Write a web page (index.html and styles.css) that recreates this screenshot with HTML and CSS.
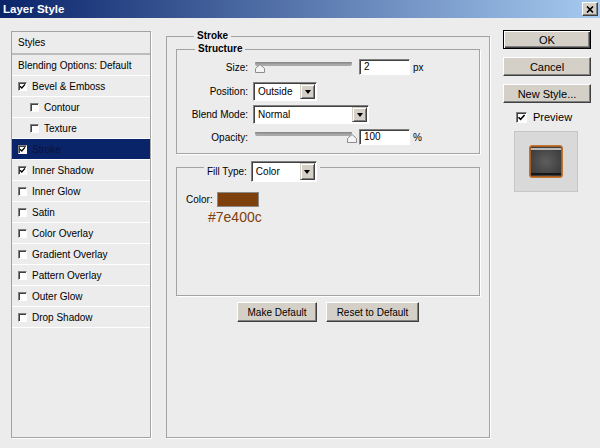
FILE: index.html
```html
<!DOCTYPE html>
<html>
<head>
<meta charset="utf-8">
<title>Layer Style</title>
<link rel="stylesheet" href="styles.css">
</head>
<body>
<div class="titlebar">
  <span class="title">Layer Style</span>
  <span class="close"><svg width="8" height="7" viewBox="0 0 8 7"><path d="M1 0.5 L7 6.5 M7 0.5 L1 6.5" stroke="#000" stroke-width="1.7" fill="none"/></svg></span>
</div>
<div class="content">
  <div class="list">
    <div class="row head styles">Styles</div>
    <div class="row">Blending Options: Default</div>
    <div class="row"><span class="cb"><svg width="7" height="7" viewBox="0 0 7 7"><path d="M1 3.2 L2.8 5 L6 1.4" stroke="#000" stroke-width="1.4" fill="none"/></svg></span>Bevel &amp; Emboss</div>
    <div class="row sub"><span class="cb"></span>Contour</div>
    <div class="row sub"><span class="cb"></span>Texture</div>
    <div class="row selected"><span class="cb"><svg width="7" height="7" viewBox="0 0 7 7"><path d="M1 3.2 L2.8 5 L6 1.4" stroke="#000" stroke-width="1.4" fill="none"/></svg></span>Stroke</div>
    <div class="row"><span class="cb"><svg width="7" height="7" viewBox="0 0 7 7"><path d="M1 3.2 L2.8 5 L6 1.4" stroke="#000" stroke-width="1.4" fill="none"/></svg></span>Inner Shadow</div>
    <div class="row"><span class="cb"></span>Inner Glow</div>
    <div class="row"><span class="cb"></span>Satin</div>
    <div class="row"><span class="cb"></span>Color Overlay</div>
    <div class="row"><span class="cb"></span>Gradient Overlay</div>
    <div class="row"><span class="cb"></span>Pattern Overlay</div>
    <div class="row"><span class="cb"></span>Outer Glow</div>
    <div class="row"><span class="cb"></span>Drop Shadow</div>
  </div>

  <fieldset class="group stroke">
    <legend>Stroke</legend>
    <fieldset class="group structure">
      <legend>Structure</legend>
      <div class="field f-size">
        <span class="lbl">Size:</span>
        <svg class="slider" width="104" height="16" viewBox="0 0 104 16"><rect x="2" y="3" width="97" height="4" rx="2" fill="#a9a9a9"/><rect x="2" y="3" width="97" height="1.5" rx="0.75" fill="#8a8a8a"/><path d="M7 5.5 L11.5 9.5 L11.5 13.5 L2.5 13.5 L2.5 9.5 Z" fill="#f4f4f4" stroke="#8c8c8c" stroke-width="1"/></svg>
        <span class="input">2</span><span class="unit">px</span>
      </div>
      <div class="field f-pos">
        <span class="lbl">Position:</span>
        <div class="combo w-pos"><span class="val">Outside</span><span class="arrow"></span></div>
      </div>
      <div class="field f-blend">
        <span class="lbl">Blend Mode:</span>
        <div class="combo w-blend"><span class="val">Normal</span><span class="arrow"></span></div>
      </div>
      <div class="field f-op">
        <span class="lbl">Opacity:</span>
        <svg class="slider" width="104" height="16" viewBox="0 0 104 16"><rect x="2" y="3" width="97" height="4" rx="2" fill="#a9a9a9"/><rect x="2" y="3" width="97" height="1.5" rx="0.75" fill="#8a8a8a"/><path d="M99 5.5 L103.5 9.5 L103.5 13.5 L94.5 13.5 L94.5 9.5 Z" fill="#f4f4f4" stroke="#8c8c8c" stroke-width="1"/></svg>
        <span class="input">100</span><span class="unit">%</span>
      </div>
    </fieldset>

    <fieldset class="group fill">
      <legend><div class="fill-legend"><span class="fl-lbl">Fill Type:</span><div class="combo w-fill"><span class="val">Color</span><span class="arrow"></span></div></div></legend>
      <div class="color-row"><span class="c-lbl">Color:</span><span class="swatch"></span></div>
      <div class="hex">#7e400c</div>
    </fieldset>

    <div class="actions">
      <button class="btn small w-make">Make Default</button>
      <button class="btn small w-reset">Reset to Default</button>
    </div>
  </fieldset>

  <div class="side">
    <button class="btn big default">OK</button>
    <button class="btn big">Cancel</button>
    <button class="btn big">New Style...</button>
    <div class="preview-row"><span class="cb cb-lg"><svg width="9" height="9" viewBox="0 0 9 9"><path d="M1.5 4.2 L3.6 6.3 L7.6 2" stroke="#000" stroke-width="1.6" fill="none"/></svg></span>Preview</div>
    <div class="preview-box">
      <svg width="34" height="33" viewBox="0 0 34 33">
        <defs>
          <radialGradient id="g" cx="50%" cy="50%" r="60%">
            <stop offset="0" stop-color="#5e5e5e"/>
            <stop offset="1" stop-color="#3c3c3c"/>
          </radialGradient>
        </defs>
        <rect x="0.5" y="0.5" width="33" height="32" rx="2.5" fill="#a85e22" stroke="#c27634"/>
        <rect x="2" y="2" width="30" height="29" fill="url(#g)"/>
        <rect x="2" y="3" width="30" height="2" fill="#b9b9b9"/>
        <rect x="2" y="28" width="30" height="2" fill="#161616"/>
      </svg>
    </div>
  </div>
</div>
</body>
</html>
```

FILE: styles.css
```css
* { box-sizing: border-box; }
html, body { margin: 0; padding: 0; }
body {
  width: 600px;
  height: 448px;
  overflow: hidden;
  background: #ececec;
  font-family: "Liberation Sans", Arial, sans-serif;
  font-size: 10px;
  color: #000;
}

.titlebar {
  height: 18px;
  background: linear-gradient(to right, #0a246a, #a6caf0);
  display: flex;
  align-items: center;
  justify-content: space-between;
  padding: 0 2px 0 3px;
}
.title { color: #fff; font-weight: bold; font-size: 11.5px; }
.close {
  width: 16px;
  height: 14px;
  background: #d4d0c8;
  border: 1px solid;
  border-color: #fff #404040 #404040 #fff;
  box-shadow: inset -1px -1px 0 #808080;
  display: flex;
  align-items: center;
  justify-content: center;
}
.close svg { display: block; }

.content {
  display: flex;
  align-items: flex-start;
  padding: 12px 0 0 11px;
}

/* left list */
.list {
  flex: none;
  width: 140px;
  height: 407px;
  margin-top: 1px;
  border: 1px solid #a3a3a3;
  box-shadow: 1px 1px 0 #fff;
}
.row {
  height: 21px;
  display: flex;
  align-items: center;
  padding-left: 6px;
  border-bottom: 1px solid #fff;
  white-space: nowrap;
}
.row.styles {
  height: 23px;
  border-bottom: 2px solid #bcbcbc;
}
.row.sub { padding-left: 18px; }
.row.selected { background: #0a246a; color: #0a1336; }

.cb {
  flex: none;
  width: 9px;
  height: 9px;
  margin-right: 5px;
  background: #fff;
  border: 1px solid;
  border-color: #808080 #fff #fff #808080;
  box-shadow: inset 1px 1px 0 #404040;
  display: flex;
}
.cb svg { display: block; }
.cb-lg { width: 11px; height: 11px; margin-right: 6px; }

/* group boxes */
.group {
  margin: 0;
  padding: 0;
  min-width: 0;
  border: 1px solid #a3a3a3;
  box-shadow: 1px 1px 0 #fff;
}
.group > legend {
  margin-left: 18px;
  padding: 0 3px;
  line-height: 12px;
  height: 12px;
  font-weight: bold;
}
.stroke {
  flex: none;
  width: 324px;
  height: 408px;
  margin-left: 15px;
  padding: 1px 9px 0 9px;
}
.structure { padding: 4px 0 8px 0; }

.field { display: flex; align-items: center; }
.lbl { width: 71px; text-align: right; margin-right: 5px; }
.f-size, .f-op { height: 16px; }
.f-pos { margin-top: 7px; height: 19px; }
.f-blend { margin-top: 4px; height: 19px; }
.f-op { margin-top: 5px; }
.slider { display: block; flex: none; }

.input {
  width: 51px;
  height: 16px;
  margin-left: 2px;
  background: #fff;
  border: 1px solid;
  border-color: #808080 #fff #fff #808080;
  box-shadow: inset 1px 1px 0 #404040;
  padding-left: 4px;
  line-height: 14px;
}
.unit { margin-left: 3px; }

.combo {
  display: flex;
  height: 19px;
  background: #fff;
  border: 1px solid;
  border-color: #808080 #fff #fff #808080;
  box-shadow: inset 1px 1px 0 #404040;
  padding: 1px 1px 1px 0;
}
.combo .val { flex: 1; padding-left: 4px; display: flex; align-items: center; }
.combo .arrow {
  width: 15px;
  background: #d4d0c8;
  border: 1px solid;
  border-color: #d4d0c8 #404040 #404040 #d4d0c8;
  box-shadow: inset 1px 1px 0 #fff, inset -1px -1px 0 #808080;
  display: flex;
  align-items: center;
  justify-content: center;
}
.combo .arrow::after {
  content: "";
  width: 0;
  height: 0;
  border-left: 3.5px solid transparent;
  border-right: 3.5px solid transparent;
  border-top: 4px solid #000;
}
.w-pos { width: 64px; }
.w-blend { width: 116px; }
.w-fill { width: 66px; height: 21px; font-weight: normal; }

.fill {
  margin-top: 7px;
  height: 135px;
  padding: 0 9px;
}
.fill-legend { display: flex; align-items: flex-start; height: 12px; font-weight: normal; }
.fl-lbl { line-height: 21px; margin-right: 4px; }

.color-row { display: flex; align-items: center; height: 15px; margin-top: 19px; }
.c-lbl { margin-right: 4px; }
.swatch {
  width: 42px;
  height: 15px;
  background: #7e400c;
  border: 1px solid #8a8a8a;
}
.hex {
  margin-top: 2px;
  padding-left: 22px;
  font-size: 14px;
  line-height: 16px;
  color: #7e400c;
}

/* buttons */
.btn {
  font-family: "Liberation Sans", Arial, sans-serif;
  color: #000;
  background: #d4d0c8;
  border: 1px solid;
  border-color: #fff #404040 #404040 #fff;
  box-shadow: inset -1px -1px 0 #808080;
  padding: 0;
  margin: 0;
}
.btn.small { height: 20px; font-size: 10px; }
.w-make { width: 80px; }
.w-reset { width: 93px; }
.actions {
  display: flex;
  justify-content: center;
  gap: 9px;
  margin-top: 6px;
}

.side {
  flex: none;
  width: 88px;
  margin-left: 13px;
  display: flex;
  flex-direction: column;
}
.btn.big { height: 19px; font-size: 11px; margin-bottom: 8px; }
.btn.default {
  border-color: #000;
  box-shadow: inset 1px 1px 0 #fff, inset -1px -1px 0 #404040, inset -2px -2px 0 #808080;
}
.preview-row {
  display: flex;
  align-items: center;
  height: 14px;
  margin-top: -1px;
  padding-left: 13px;
  font-size: 11px;
}
.preview-box {
  width: 64px;
  height: 61px;
  margin: 7px 0 0 11px;
  background: #d9d9d9;
  border: 1px solid #c6c6c6;
  display: flex;
  align-items: center;
  justify-content: center;
}
.preview-box svg { display: block; }
```
